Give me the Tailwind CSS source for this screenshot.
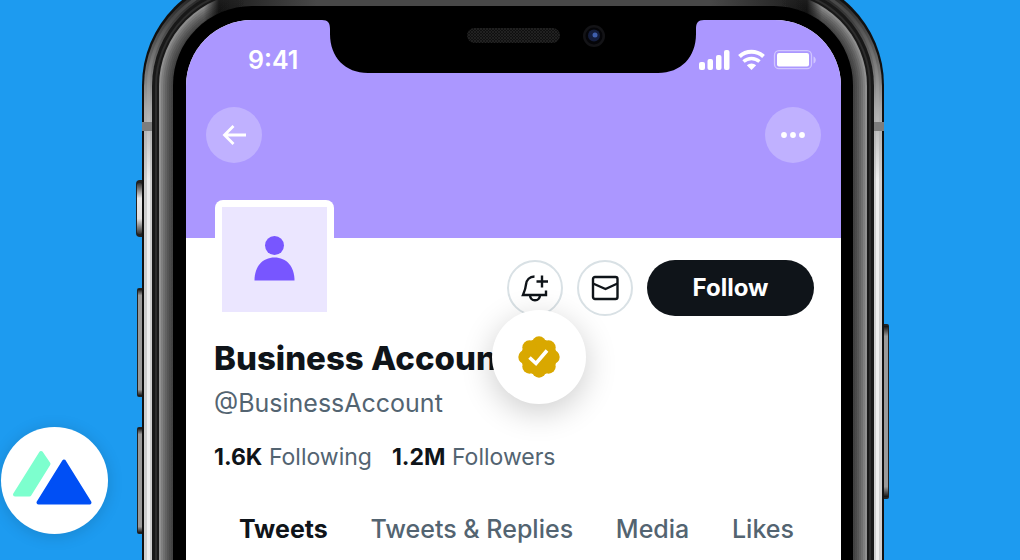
<!DOCTYPE html>
<html lang="en">
<head>
<meta charset="utf-8">
<meta name="viewport" content="width=device-width, initial-scale=1">
<title>Business Account</title>
<script src="https://cdn.jsdelivr.net/npm/@tailwindcss/browser@4"></script>
</head>
<body class="bg-[#1d9bf0] font-['Inter','Liberation_Sans',sans-serif] text-[#0f1419]">
<div class="relative flex min-h-screen justify-center overflow-hidden pl-[6px]">

  <!-- Phone -->
  <main class="relative flex w-full max-w-[754px] flex-col pt-5 pr-[49px] pl-[50px]">
    <!-- Metal frame -->
    <svg class="absolute top-0 left-0 h-[1600px] w-full" viewBox="0 0 754 1600" preserveAspectRatio="none" aria-hidden="true">
      <defs>
        <linearGradient id="rim" gradientUnits="userSpaceOnUse" x1="0" y1="0" x2="0" y2="180">
          <stop offset="0" stop-color="#2a2a2a"/><stop offset=".15" stop-color="#444"/><stop offset=".35" stop-color="#6a6a6a"/><stop offset=".6" stop-color="#a8a8a8"/><stop offset="1" stop-color="#cfcfcf"/>
        </linearGradient>
        <linearGradient id="shine" gradientUnits="userSpaceOnUse" x1="0" y1="0" x2="0" y2="180">
          <stop offset=".1" stop-color="#484848"/><stop offset=".5" stop-color="#999"/><stop offset="1" stop-color="#efefef"/>
        </linearGradient>
        <linearGradient id="band" gradientUnits="userSpaceOnUse" x1="0" y1="0" x2="754" y2="0">
          <stop offset="0" stop-color="#989898"/><stop offset=".05" stop-color="#8c8c8c"/><stop offset=".09" stop-color="#8a8a8a"/><stop offset=".11" stop-color="#1c1c1c"/><stop offset=".24" stop-color="#484848"/>
          <stop offset=".76" stop-color="#484848"/><stop offset=".89" stop-color="#1c1c1c"/><stop offset=".91" stop-color="#8a8a8a"/><stop offset=".95" stop-color="#8c8c8c"/><stop offset="1" stop-color="#989898"/>
        </linearGradient>
        <linearGradient id="shade" gradientUnits="userSpaceOnUse" x1="0" y1="0" x2="754" y2="0">
          <stop offset="0" stop-opacity=".13"/><stop offset=".09" stop-opacity=".11"/><stop offset=".15" stop-opacity="0"/><stop offset=".85" stop-opacity="0"/><stop offset=".91" stop-opacity=".11"/><stop offset="1" stop-opacity=".13"/>
        </linearGradient>
        <linearGradient id="key" x1="0" y1="0" x2="0" y2="1">
          <stop offset="0" stop-color="#111"/><stop offset=".06" stop-color="#9a9a9a"/><stop offset=".94" stop-color="#9a9a9a"/><stop offset="1" stop-color="#111"/>
        </linearGradient>
        <linearGradient id="mute" x1="0" y1="0" x2="0" y2="1">
          <stop offset="0" stop-color="#333"/><stop offset=".3" stop-color="#e8e8e8"/><stop offset=".7" stop-color="#e0e0e0"/><stop offset="1" stop-color="#333"/>
        </linearGradient>
      </defs>
      <rect x="0" y="180" width="12" height="57" rx="4" fill="#222"/>
      <rect x="1" y="183" width="5" height="51" rx="2" fill="url(#mute)"/>
      <rect x="1" y="288" width="10" height="109" rx="2" fill="#222"/>
      <rect x="2" y="289" width="4" height="107" fill="url(#key)"/>
      <rect x="1" y="427" width="10" height="107" rx="2" fill="#222"/>
      <rect x="2" y="428" width="4" height="105" fill="url(#key)"/>
      <rect x="745" y="324" width="8" height="175" rx="2" fill="#222"/>
      <rect x="748" y="326" width="4" height="171" fill="url(#key)"/>
      <rect x="6" y="-25" width="742" height="1700" rx="110" fill="#111"/>
      <rect x="8" y="-22" width="738" height="1700" rx="108" fill="url(#rim)"/>
      <rect x="12.500" y="-17.500" width="729" height="1700" rx="103" fill="none" stroke="url(#shine)" stroke-width="3"/>
      <rect x="16" y="-14" width="722" height="1700" rx="100" fill="#181818"/>
      <rect x="20" y="-10" width="714" height="1700" rx="96" fill="none" stroke="#2d2d2d" stroke-width="2"/>
      <rect x="23" y="-7" width="708" height="1700" rx="93" fill="url(#band)"/>
      <g fill="url(#shade)">
        <rect x="25" y="-5" width="704" height="1700" rx="91"/><rect x="27" y="-3" width="700" height="1700" rx="89"/><rect x="29" y="-1" width="696" height="1700" rx="87"/><rect x="31" y="1" width="692" height="1700" rx="85"/><rect x="33" y="3" width="688" height="1700" rx="83"/><rect x="35" y="5" width="684" height="1700" rx="81"/>
      </g>
      <rect x="37" y="6" width="680" height="1700" rx="79" fill="#000"/>
      <path d="M6 122h10v9H6zM738 122h10v9h-10z" fill="#7d7d7d"/>
    </svg>

    <!-- Screen -->
    <div class="relative flex grow flex-col overflow-hidden rounded-t-[66px] bg-white">
      <header class="h-[218px] bg-[#ab97ff] text-white">
        <div class="flex justify-between">
          <time class="w-[136px] pt-[24px] pl-[62px] text-[25px] leading-8 font-semibold">9:41</time>
          <svg class="h-[53px] w-[382px] shrink-0" viewBox="0 0 382 53" aria-hidden="true">
            <defs>
              <pattern id="mesh" width="3" height="3" patternUnits="userSpaceOnUse"><rect width="3" height="3" fill="#101010"/><path d="M0 0l3 3M3 0L0 3" stroke="#262626" stroke-width=".7"/></pattern>
            </defs>
            <path d="M0 0c6 0 8 3 8 9v5c0 23 15 39 38 39h290c23 0 38-16 38-39V9c0-6 2-9 8-9z" fill="#000"/>
            <rect x="145" y="8" width="93" height="15" rx="7.500" fill="url(#mesh)"/>
            <circle cx="272" cy="16" r="11" fill="#131316"/><circle cx="272" cy="16" r="8.500" fill="#050508"/><circle cx="272" cy="15.500" r="6" fill="#141d3c"/><circle cx="273" cy="15" r="2.500" fill="#3f5fae"/>
          </svg>
          <svg class="mt-[27px] mr-[25px] h-[26px] w-[112px] shrink-0 overflow-visible" viewBox="0 0 112 26" fill="#fff" aria-label="Signal, Wi-Fi and battery status" role="img">
            <rect x="-5" y="15" width="6" height="8" rx="2"/><rect x="3.500" y="12" width="5.500" height="11" rx="2"/><rect x="12" y="8" width="5.500" height="15" rx="2"/><rect x="20" y="3" width="5.500" height="20" rx="2"/>
            <g transform="translate(-4)">
              <path d="M39.500 9.500a17.500 17.500 0 0 1 24 0" fill="none" stroke="#fff" stroke-width="4"/>
              <path d="M43.500 14.500a12 12 0 0 1 16 0" fill="none" stroke="#fff" stroke-width="3.500"/>
              <path d="M46.800 18.200a7 7 0 0 1 9.400 0l-4.700 4.800z"/>
              <rect x="74.500" y="3.700" width="37" height="18" rx="4.500" fill="none" stroke="#fff" stroke-opacity=".45" stroke-width="1.300"/>
              <rect x="77" y="6" width="32" height="13.500" rx="2"/>
              <path d="M113.500 9.500c3 1 3 6 0 7z" fill-opacity=".45"/>
            </g>
          </svg>
        </div>
        <nav class="mt-[31px] flex justify-between px-5" aria-label="Profile navigation">
          <button class="grid size-14 place-items-center rounded-full bg-white/25" aria-label="Back">
            <svg class="size-7" viewBox="0 0 28 28" fill="none" stroke="#fff" stroke-width="2.800"><path d="M26 14H4.500M13.500 5l-9 9 9 9"/></svg>
          </button>
          <button class="grid size-14 place-items-center rounded-full bg-white/25" aria-label="More">
            <svg class="size-7" viewBox="0 0 28 28" fill="#fff"><circle cx="5" cy="14" r="2.900"/><circle cx="14" cy="14" r="2.900"/><circle cx="23" cy="14" r="2.900"/></svg>
          </button>
        </nav>
      </header>

      <section class="flex flex-col px-7">
        <div class="flex h-[97px] items-start justify-between">
          <div class="-mt-[38px] ml-px w-[119px] rounded-lg bg-white p-[7px]">
            <svg class="w-full bg-[#ebe6ff]" viewBox="0 0 105 105" fill="#7856ff" role="img" aria-label="Profile picture"><circle cx="52.500" cy="38.500" r="9.500"/><path d="M32.500 73.500c0-14 8-23 20-23s20 9 20 23z"/></svg>
          </div>
          <div class="-mr-px mt-[22px] flex gap-[14px]">
            <button class="grid size-14 place-items-center rounded-full border-2 border-[#d9e1e5]" aria-label="Turn on notifications">
              <svg class="size-7" viewBox="0 0 28 28" fill="none" stroke="#0f1419" stroke-width="2.400"><path d="M13.500 2.500C8.500 2.500 5.500 6 5 10.500c-.3 4-1.700 7.500-3 10.500h23v-4.500M9 21.500c.3 3 2 4.700 5 4.700s4.700-1.700 5-4.700M21 1.500v12M15.500 7.500H27"/></svg>
            </button>
            <button class="grid size-14 place-items-center rounded-full border-2 border-[#d9e1e5]" aria-label="Message">
              <svg class="size-7" viewBox="0 0 28 28" fill="none" stroke="#0f1419" stroke-width="2.400"><rect x="2" y="3" width="24.500" height="22" rx="2"/><path d="M2 9.500l12.500 5.500 12-5.500"/></svg>
            </button>
            <button class="h-14 w-[167px] rounded-full bg-[#0f1419] text-2xl font-bold text-white">Follow</button>
          </div>
        </div>

        <div class="relative">
          <h1 class="text-[33px] leading-[46px] font-extrabold whitespace-nowrap">Business Account</h1>
          <div class="absolute -top-[25px] left-[278px] grid size-[94px] place-items-center rounded-full bg-white shadow-[0_8px_32px_rgba(0,0,0,0.2)]">
            <svg class="size-[42px]" viewBox="0 0 42 42" fill="#d9a800" role="img" aria-label="Verified business">
              <circle cx="21" cy="21" r="18"/><circle cx="21" cy="7.500" r="7.200"/><circle cx="30.500" cy="11.500" r="7.200"/><circle cx="34.500" cy="21" r="7.200"/><circle cx="30.500" cy="30.500" r="7.200"/><circle cx="21" cy="34.500" r="7.200"/><circle cx="11.500" cy="30.500" r="7.200"/><circle cx="7.500" cy="21" r="7.200"/><circle cx="11.500" cy="11.500" r="7.200"/>
              <path d="M11.500 21.500l6.500 6 11-13" fill="none" stroke="#fff" stroke-width="3.600"/>
            </svg>
          </div>
        </div>
        <p class="mt-1 text-[25px] leading-9 text-[#536471]">@BusinessAccount</p>
        <p class="mt-[18px] flex gap-5 text-[23px] leading-9 text-[#536471]">
          <a href="#following"><b class="font-bold text-[#0f1419]">1.6K</b> Following</a>
          <a href="#followers"><b class="font-bold text-[#0f1419]">1.2M</b> Followers</a>
        </p>
      </section>

      <nav class="mt-9 flex justify-between pr-[47px] pl-[53px] text-[25px] leading-9 font-medium whitespace-nowrap text-[#536471]" aria-label="Profile sections">
        <a href="#tweets" class="font-bold text-[#0f1419]">Tweets</a>
        <a href="#replies">Tweets &amp; Replies</a>
        <a href="#media">Media</a>
        <a href="#likes">Likes</a>
      </nav>
    </div>
  </main>

  <!-- Brand mark -->
  <a href="#home" aria-label="Home" class="absolute bottom-[26px] left-px grid size-[107px] place-items-center rounded-full bg-white shadow-[0_2px_16px_rgba(0,0,0,0.15)]">
    <svg class="size-[107px]" viewBox="0 0 107 107" stroke-linejoin="round" stroke-width="4" aria-hidden="true">
      <path d="M40 26l7.500 11L28.500 67.500H14z" fill="#7dffce" stroke="#7dffce"/>
      <path d="M63 34.500L88.500 75.500H37.500z" fill="#004ff5" stroke="#004ff5"/>
    </svg>
  </a>
</div>
</body>
</html>
